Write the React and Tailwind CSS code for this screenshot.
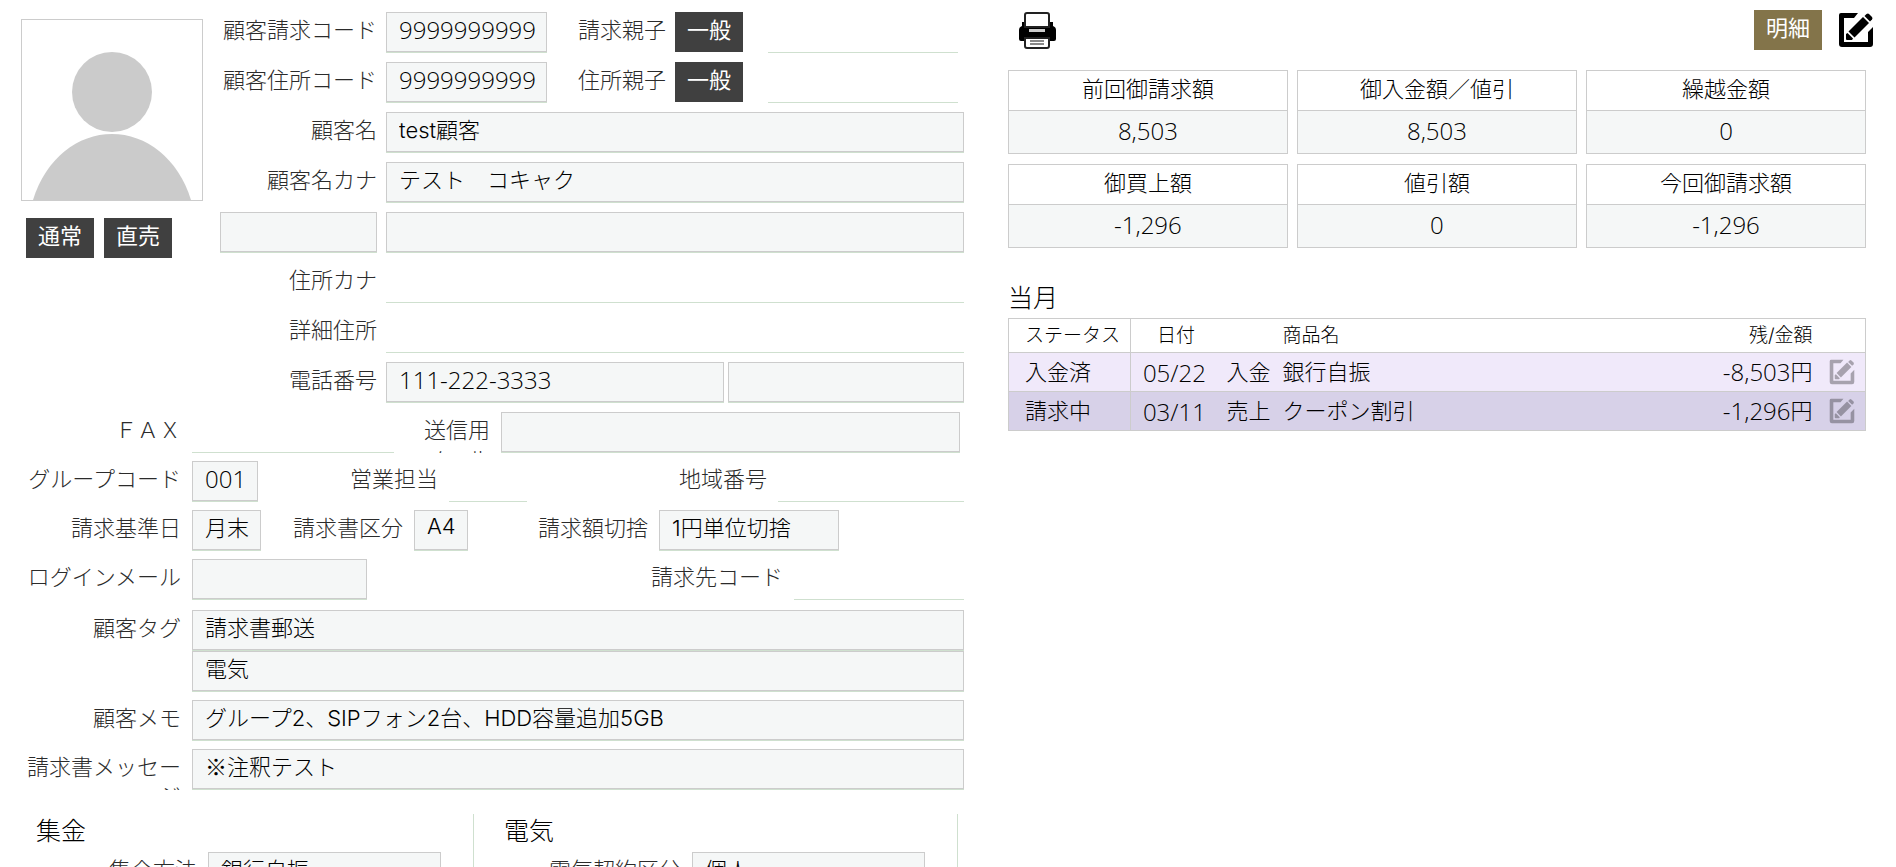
import { clsx } from 'clsx';

const SUMMARY = [
  { title: '前回御請求額', value: '8,503' },
  { title: '御入金額／値引', value: '8,503' },
  { title: '繰越金額', value: '0' },
  { title: '御買上額', value: '-1,296' },
  { title: '値引額', value: '0' },
  { title: '今回御請求額', value: '-1,296' },
];

const ENTRIES = [
  { status: '入金済', date: '05/22', type: '入金', name: '銀行自振', amount: '-8,503', tone: 'bg-[#f0e9fa]' },
  { status: '請求中', date: '03/11', type: '売上', name: 'クーポン割引', amount: '-1,296', tone: 'bg-[#d7d1e8]' },
];

const NUMERIC = "font-['Open_Sans','Noto_Sans',sans-serif] text-2xl font-[350]";

function Label({ htmlFor, className, children }) {
  return (
    <label
      htmlFor={htmlFor}
      className={clsx('h-[41px] shrink-0 overflow-hidden pt-1 text-right leading-[29px] text-[#2b2b2b]', className)}
    >
      {children}
    </label>
  );
}

// Read-only value. "plain" leaves only the underline of the field.
function Field({ id, value = '', label, plain, numeric, className }) {
  return (
    <div className={clsx('h-[41px] min-w-0 border-b border-[#cfe0cf]', className)}>
      <input
        id={id}
        type="text"
        readOnly
        defaultValue={value}
        aria-label={label}
        className={clsx(
          'block h-10 w-full pl-3 text-black outline-none',
          numeric ? 'pb-[6px]' : 'pb-2',
          numeric && NUMERIC,
          !plain && 'border border-[#ccc] bg-[#f5f7f7]'
        )}
      />
    </div>
  );
}

function Chip({ className = 'bg-[#404040]', children }) {
  return (
    <button type="button" className={clsx('h-10 w-[68px] shrink-0 pb-1 font-normal text-white', className)}>
      {children}
    </button>
  );
}

function EditIcon({ className }) {
  return (
    <svg viewBox="0 0 36 36" className={className} fill="currentColor" aria-hidden="true">
      <path d="M3 1H20L16 6H6V30H30V20L35 15V32Q35 35 32 35H4Q1 35 1 32V3Q1 1 3 1Z" />
      <path d="M25 5L31 11L16.500 25.500L10.500 19.500Z" />
      <path d="M9.500 21L15 26.500L14 28H9Q8 28 8 27V22Z" />
      <path d="M26.500 4L28.500 2Q30 1 31 2L34 5Q35 6 34 7.500L32 9.500Z" />
    </svg>
  );
}

function PrinterIcon() {
  return (
    <svg viewBox="0 0 37 37" className="size-[37px]" aria-hidden="true">
      <path d="M3 10H34V14Q37 15 37 18V27Q37 29 35 29H2Q0 29 0 27V18Q0 15 3 14Z" fill="#000" />
      <path d="M8 1H28Q30 1 30 3V15H6V3Q6 1 8 1Z" fill="#fff" stroke="#222" strokeWidth="2" />
      <rect x="10" y="17" width="16" height="3" fill="#ccc" />
      <path d="M6 26H30V34Q30 36 28 36H8Q6 36 6 34Z" fill="#fff" stroke="#222" strokeWidth="2" />
      <path d="M11 29H25M11 32H25" stroke="#888" strokeWidth="2" />
    </svg>
  );
}

function Avatar() {
  return (
    <svg viewBox="0 0 180 180" className="block w-full border border-[#ccc] bg-white" role="img" aria-label="顧客写真">
      <circle cx="90" cy="72" r="40" fill="#cbcbcb" />
      <path d="M11 180C24 138 56 114 90 114S156 138 169 180Z" fill="#cbcbcb" />
    </svg>
  );
}

function CustomerHead() {
  return (
    <section className="flex">
      <div className="w-[183px] shrink-0 pl-px pt-[7px]">
        <Avatar />
        <div className="flex gap-[10px] pl-[5px] pt-[17px]">
          <Chip>通常</Chip>
          <Chip>直売</Chip>
        </div>
      </div>

      <div className="ml-[17px] flex min-w-0 flex-1 flex-col gap-[9px]">
        {[
          { id: 'bill-code', title: '顧客請求コード', parent: '請求親子' },
          { id: 'addr-code', title: '顧客住所コード', parent: '住所親子' },
        ].map((row) => (
          <div key={row.id} className="flex gap-[9px]">
            <Label htmlFor={row.id} className="w-[157px]">{row.title}</Label>
            <Field id={row.id} value="9999999999" numeric className="w-[161px]" />
            <Label htmlFor={`${row.id}-parent`} className="ml-[22px]">{row.parent}</Label>
            <Chip>一般</Chip>
            <Field id={`${row.id}-parent`} plain className="ml-4 mr-[6px] flex-1" />
          </div>
        ))}
        <div className="flex gap-[9px]">
          <Label htmlFor="name" className="w-[157px]">顧客名</Label>
          <Field id="name" value="test顧客" className="flex-1" />
        </div>
        <div className="flex gap-[9px]">
          <Label htmlFor="kana" className="w-[157px]">顧客名カナ</Label>
          <Field id="kana" value="テスト　コキャク" className="flex-1" />
        </div>
        <div className="flex gap-[9px]">
          <Field label="郵便番号" className="w-[157px]" />
          <Field label="住所" className="flex-1" />
        </div>
        <div className="flex gap-[9px]">
          <Label htmlFor="addr-kana" className="w-[157px]">住所カナ</Label>
          <Field id="addr-kana" plain className="flex-1" />
        </div>
        <div className="flex gap-[9px]">
          <Label htmlFor="addr-detail" className="w-[157px]">詳細住所</Label>
          <Field id="addr-detail" plain className="flex-1" />
        </div>
        <div className="flex gap-[9px]">
          <Label htmlFor="tel" className="w-[157px]">電話番号</Label>
          <div className="grid flex-1 grid-cols-[10fr_7fr] gap-1">
            <Field id="tel" value="111-222-3333" numeric />
            <Field label="電話番号2" />
          </div>
        </div>
      </div>
    </section>
  );
}

function Billing() {
  return (
    <section className="mt-[9px] flex flex-col gap-2">
      <div className="flex gap-[11px]">
        <Label htmlFor="fax" className="w-[161px]">ＦＡＸ</Label>
        <Field id="fax" plain className="w-[202px]" />
        <Label htmlFor="mail" className="ml-[18px] w-[67px] break-all">送信用メール</Label>
        <Field id="mail" className="mr-1 flex-1" />
      </div>
      <div className="flex gap-[11px]">
        <Label htmlFor="group" className="w-[161px]">グループコード</Label>
        <Field id="group" value="001" numeric className="w-[66px]" />
        <Label htmlFor="sales" className="w-[169px]">営業担当</Label>
        <Field id="sales" plain className="w-[78px]" />
        <Label htmlFor="area" className="flex-1">地域番号</Label>
        <Field id="area" plain className="w-[186px]" />
      </div>
      <div className="flex gap-[11px]">
        <Label htmlFor="closing" className="w-[161px]">請求基準日</Label>
        <Field id="closing" value="月末" className="w-[69px]" />
        <Label htmlFor="paper" className="w-[131px]">請求書区分</Label>
        <Field id="paper" value="A4" className="w-[54px]" />
        <Label htmlFor="rounding" className="w-[169px]">請求額切捨</Label>
        <Field id="rounding" value="1円単位切捨" className="w-[180px]" />
      </div>
      <div className="flex gap-[11px]">
        <Label htmlFor="login" className="w-[161px]">ログインメール</Label>
        <Field id="login" className="w-[175px]" />
        <Label htmlFor="payer" className="flex-1">請求先コード</Label>
        <Field id="payer" plain className="w-[170px]" />
      </div>
    </section>
  );
}

function Notes() {
  return (
    <section className="mt-[10px] flex flex-col gap-2">
      <div className="flex gap-[11px]">
        <Label htmlFor="tag" className="w-[161px]">顧客タグ</Label>
        <div className="flex-1">
          <Field id="tag" value="請求書郵送" />
          <Field label="顧客タグ2" value="電気" />
        </div>
      </div>
      <div className="flex gap-[11px]">
        <Label htmlFor="memo" className="w-[161px]">顧客メモ</Label>
        <Field id="memo" value="グループ2、SIPフォン2台、HDD容量追加5GB" className="flex-1" />
      </div>
      <div className="flex gap-[11px]">
        <Label htmlFor="message" className="w-[161px] break-all">請求書メッセージ</Label>
        <Field id="message" value="※注釈テスト" className="flex-1 font-['Noto_Sans_CJK_JP',sans-serif]" />
      </div>
    </section>
  );
}

function Contract({ id, title, label, value, className }) {
  return (
    <section className={clsx('border-r border-[#cfe0cf] pr-8', className)}>
      <h2 className="h-[38px] text-[25px] leading-[34px] font-light text-black">{title}</h2>
      <div className="flex gap-[11px]">
        <Label htmlFor={id} className="flex-1">{label}</Label>
        <Field id={id} value={value} className="w-[233px]" />
      </div>
    </section>
  );
}

function Ledger() {
  return (
    <section>
      <h2 className="mt-8 mb-[2px] text-[25px] leading-9 font-light text-black">当月</h2>
      <table className="w-full table-fixed border-collapse border border-[#ccc] text-left text-black">
        <colgroup>
          <col className="w-[122px]" />
          <col className="w-24" />
          <col className="w-14" />
          <col />
          <col className="w-[150px]" />
          <col className="w-[53px]" />
        </colgroup>
        <thead>
          <tr className="h-[34px] text-[19px] leading-[30px]">
            <th className="border-r border-[#ccc] pl-4 font-light">ステータス</th>
            <th className="pl-[26px] font-light">日付</th>
            <th />
            <th className="font-light">商品名</th>
            <th className="text-right font-light">残/金額</th>
            <th />
          </tr>
        </thead>
        <tbody>
          {ENTRIES.map((row) => (
            <tr key={row.date} className={clsx('h-[39px] border-t border-[#ccc] leading-[33px]', row.tone)}>
              <td className="border-r border-[#ccc] pl-4">{row.status}</td>
              <td className="pl-3">
                <span className={clsx(NUMERIC, 'block leading-[31px]')}>{row.date}</span>
              </td>
              <td>{row.type}</td>
              <td>{row.name}</td>
              <td>
                <div className="flex justify-end">
                  <span className={clsx(NUMERIC, 'leading-[31px]')}>{row.amount}</span>円
                </div>
              </td>
              <td className="pl-4">
                <button type="button" aria-label="編集" className="block text-black/30">
                  <EditIcon className="size-[26px]" />
                </button>
              </td>
            </tr>
          ))}
        </tbody>
      </table>
    </section>
  );
}

export default function App() {
  return (
    <main className="grid h-screen grid-cols-[11fr_10fr] gap-11 overflow-hidden bg-white pl-5 pr-[30px] font-[Inter,'Noto_Sans_CJK_JP',sans-serif] text-[22px] font-light">
      <div className="min-w-0 pt-3">
        <CustomerHead />
        <Billing />
        <Notes />
        <div className="mt-6 mr-[6px] flex">
          <Contract id="collect" title="集金" label="集金方法" value="銀行自振" className="w-[454px] pl-4" />
          <Contract id="power" title="電気" label="電気契約区分" value="個人" className="ml-[30px] flex-1" />
        </div>
      </div>

      <div className="min-w-0 pt-[10px]">
        <div className="-mr-2 flex items-center">
          <button type="button" aria-label="印刷" className="ml-[11px]">
            <PrinterIcon />
          </button>
          <Chip className="ml-auto bg-[#83744a]">明細</Chip>
          <button type="button" aria-label="編集" className="ml-4">
            <EditIcon className="size-9" />
          </button>
        </div>
        <div className="mt-5 grid grid-cols-3 gap-x-[9px] gap-y-[10px]">
          {SUMMARY.map((item) => (
            <dl key={item.title} className="border border-[#ccc] text-center text-black">
              <dt className="h-10 border-b border-[#ccc] leading-[37px]">{item.title}</dt>
              <dd className={clsx(NUMERIC, 'h-[42px] bg-[#f5f7f7] leading-[40px]')}>{item.value}</dd>
            </dl>
          ))}
        </div>
        <Ledger />
      </div>
    </main>
  );
}
